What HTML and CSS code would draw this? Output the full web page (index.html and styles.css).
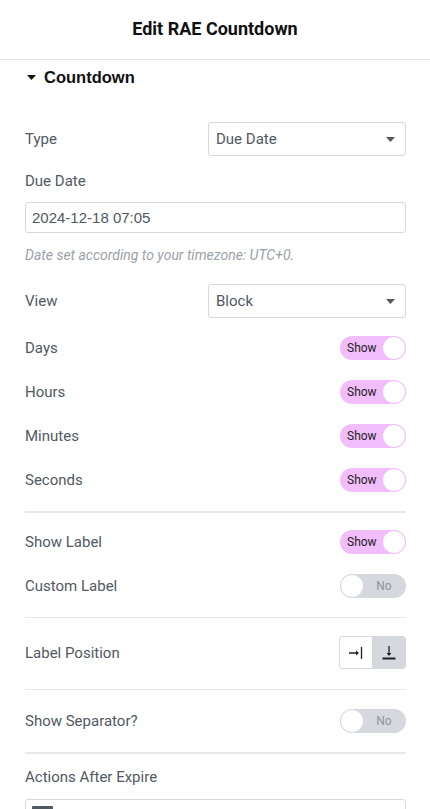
FILE: index.html
```html
<!DOCTYPE html>
<html>
<head>
<meta charset="utf-8">
<link rel="stylesheet" href="styles.css">
</head>
<body>
<div class="panel">
  <header class="panel-header">Edit RAE Countdown</header>
  <div class="section-title">
    <svg class="caret" width="9" height="5" viewBox="0 0 9 5"><polygon points="0,0 9,0 4.5,5" fill="#111"/></svg>
    <span>Countdown</span>
  </div>
  <div class="controls">
    <div class="row select-row first">
      <span class="label">Type</span>
      <div class="select"><span>Due Date</span><svg width="9" height="5" viewBox="0 0 9 5"><polygon points="0,0 9,0 4.5,5" fill="#515962"/></svg></div>
    </div>
    <div class="label block due-label">Due Date</div>
    <div class="input">2024-12-18 07:05</div>
    <div class="note">Date set according to your timezone: UTC+0.</div>
    <div class="row select-row view">
      <span class="label">View</span>
      <div class="select"><span>Block</span><svg width="9" height="5" viewBox="0 0 9 5"><polygon points="0,0 9,0 4.5,5" fill="#515962"/></svg></div>
    </div>
    <div class="row toggle-row after-select">
      <span class="label">Days</span>
      <div class="toggle on"><span class="t-text">Show</span><span class="knob"></span></div>
    </div>
    <div class="row toggle-row">
      <span class="label">Hours</span>
      <div class="toggle on"><span class="t-text">Show</span><span class="knob"></span></div>
    </div>
    <div class="row toggle-row">
      <span class="label">Minutes</span>
      <div class="toggle on"><span class="t-text">Show</span><span class="knob"></span></div>
    </div>
    <div class="row toggle-row">
      <span class="label">Seconds</span>
      <div class="toggle on"><span class="t-text">Show</span><span class="knob"></span></div>
    </div>
    <div class="divider thick"></div>
    <div class="row toggle-row after-divider">
      <span class="label">Show Label</span>
      <div class="toggle on"><span class="t-text">Show</span><span class="knob"></span></div>
    </div>
    <div class="row toggle-row">
      <span class="label">Custom Label</span>
      <div class="toggle off"><span class="knob"></span><span class="t-text">No</span></div>
    </div>
    <div class="divider"></div>
    <div class="row choose-row">
      <span class="label">Label Position</span>
      <div class="choices">
        <div class="choice">
          <svg width="16" height="16" viewBox="0 0 16 16"><path d="M1 8h8" stroke="#1f2124" stroke-width="1.3"/><polygon points="8,5.6 11,8 8,10.4" fill="#1f2124"/><path d="M13.5 2v12" stroke="#1f2124" stroke-width="1.3"/></svg>
        </div>
        <div class="choice active">
          <svg width="16" height="16" viewBox="0 0 16 16"><path d="M8 1v8" stroke="#1f2124" stroke-width="1.3"/><polygon points="5.6,8 8,11 10.4,8" fill="#1f2124"/><rect x="1.5" y="12.5" width="13" height="2" fill="#1f2124"/></svg>
        </div>
      </div>
    </div>
    <div class="divider gap-top"></div>
    <div class="row toggle-row separator-row">
      <span class="label">Show Separator?</span>
      <div class="toggle off"><span class="knob"></span><span class="t-text">No</span></div>
    </div>
    <div class="divider thick"></div>
    <div class="label block actions-label">Actions After Expire</div>
    <div class="multi"><span class="chip"></span></div>
  </div>
</div>
</body>
</html>
```
FILE: styles.css
```css
* { box-sizing: border-box; }
html, body { margin: 0; padding: 0; background: #fff; }
body {
  font-family: Roboto, "Noto Sans", sans-serif;
  color: #515962;
  width: 430px;
  height: 809px;
  overflow: hidden;
}
.panel-header {
  height: 60px;
  border-bottom: 1px solid #e6e8ea;
  display: flex;
  align-items: center;
  justify-content: center;
  font-size: 18px;
  font-weight: 700;
  color: #111;
  padding-bottom: 2px;
}
.section-title {
  height: 34px;
  display: flex;
  align-items: center;
  padding-left: 27px;
  gap: 8px;
  font-family: "Liberation Sans", Arial, sans-serif;
  font-weight: 700;
  font-size: 16.5px;
  color: #111;
}
.section-title .caret { margin-top: 1px; }
.controls {
  padding: 0 24px 0 25px;
  display: flex;
  flex-direction: column;
}
.row {
  display: flex;
  align-items: center;
  justify-content: space-between;
}
.label {
  font-size: 15px;
  line-height: 20px;
  color: #515962;
}
.select-row { height: 34px; }
.select-row.first { margin-top: 28px; }
.select-row.view { margin-top: 19px; }
.select {
  width: 198px;
  height: 34px;
  border: 1px solid #d5d8dc;
  border-radius: 3px;
  display: flex;
  align-items: center;
  justify-content: space-between;
  padding: 0 10px 0 7px;
  font-size: 15px;
  color: #515962;
}
.due-label { margin-top: 15px; }
.input {
  margin-top: 11px;
  height: 31px;
  border: 1px solid #d5d8dc;
  border-radius: 3px;
  display: flex;
  align-items: center;
  padding-left: 6px;
  font-family: "Liberation Sans", Arial, sans-serif;
  font-size: 15px;
  color: #515962;
}
.note {
  margin-top: 12px;
  font-size: 14px;
  line-height: 20px;
  font-style: italic;
  color: #9aa1a9;
}
.toggle-row { height: 24px; margin-top: 20px; }
.toggle-row.after-select { margin-top: 18px; }
.toggle-row.after-divider { margin-top: 17px; }
.toggle-row.separator-row { margin-top: 19px; }
.toggle {
  width: 66px;
  height: 24px;
  border-radius: 12px;
  display: flex;
  align-items: center;
  font-size: 12px;
}
.toggle.on { background: #f1bdfb; color: #1f2124; }
.toggle.off { background: #d5d8dc; color: #8f969e; }
.t-text { flex: 1; }
.toggle.on .t-text { padding-left: 7px; }
.toggle.off .t-text { text-align: center; padding-right: 2px; }
.knob {
  width: 24px;
  height: 24px;
  border-radius: 50%;
  background: #fff;
  flex: none;
}
.toggle.on .knob { border: 1px solid #f1bdfb; }
.toggle.off .knob { border: 1px solid #d5d8dc; }
.divider {
  height: 1px;
  background: #e6e8ea;
  margin-top: 19px;
}
.divider.thick { height: 2px; }
.divider.gap-top { margin-top: 20px; }
.choose-row { height: 33px; margin-top: 18px; }
.choices {
  display: flex;
  width: 67px;
  height: 33px;
  border: 1px solid #d5d8dc;
  border-radius: 3px;
  overflow: hidden;
}
.choice {
  flex: 1;
  display: flex;
  align-items: center;
  justify-content: center;
  background: #fff;
}
.choice + .choice { border-left: 1px solid #d5d8dc; }
.choice.active { background: #d5d8dc; }
.actions-label { margin-top: 13px; }
.multi {
  margin-top: 12px;
  height: 40px;
  border: 1px solid #d5d8dc;
  border-radius: 3px;
  padding: 6px;
}
.chip {
  display: block;
  width: 21px;
  height: 20px;
  background: #515962;
  border-radius: 1px;
}
```
